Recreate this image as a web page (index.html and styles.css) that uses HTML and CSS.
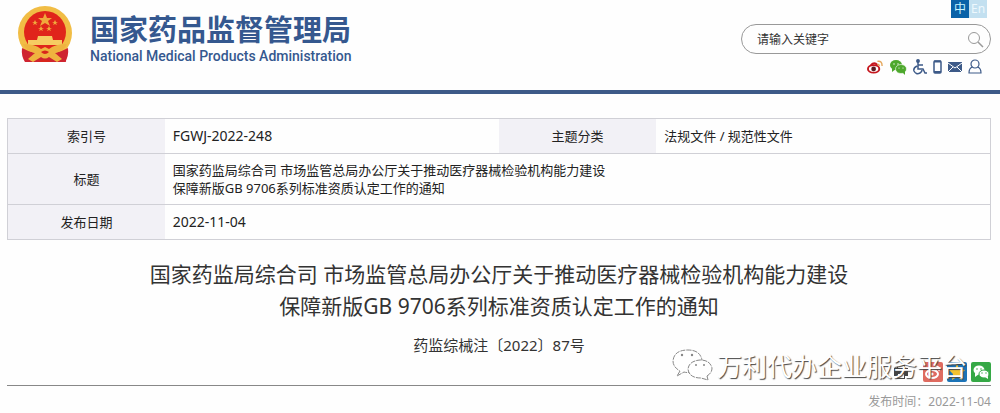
FILE: index.html
```html
<!DOCTYPE html>
<html lang="zh-CN">
<head>
<meta charset="utf-8">
<title>国家药品监督管理局</title>
<link rel="stylesheet" href="styles.css">
</head>
<body>
<header class="header">
  <a class="brand" href="#">
    <svg class="emblem" viewBox="0 0 54 58" aria-hidden="true">
      <path d="M5 36h44l-1 20q-11-4-21 0-10-4-20 0z" fill="#d0232a"/>
      <circle cx="27" cy="27" r="27" fill="#f1bd45"/>
      <circle cx="27" cy="26" r="21" fill="#e0241b"/>
      <path d="M4 42q-1 8 3 14h40q4-6 3-14-11 6-23 6T4 42z" fill="#cf2430"/>
      <path d="M27 7l2 5h5l-4 3 2 5-5-3-5 3 2-5-4-3h5zM17 14l1 2h2l-2 1 1 2-2-1-2 1 1-2-2-1h2zM37 14l1 2h2l-2 1 1 2-2-1-2 1 1-2-2-1h2zM23 20l1 2h2l-2 1 1 2-2-1-2 1 1-2-2-1h2zM31 20l1 2h2l-2 1 1 2-2-1-2 1 1-2-2-1h2z" fill="#f0a83c"/>
      <path d="M20 30h14l1 4h9v5H10v-5h9z" fill="#f6cc62"/>
      <path d="M5 38q12 0 18 5l4-2 4 2q6-5 18-5-3 7-12 9l7 6-5 3-8-5q-4 3-8 0l-8 5-5-3 7-6Q8 45 5 38z" fill="#efb33f"/>
      <path d="M23 46q4-3 8 0-4 4-8 0zM20 56q7-5 14 0z" fill="#d8261c"/>
    </svg>
    <span class="brand-text">
      <span class="brand-cn">国家药品监督管理局</span>
      <span class="brand-en">National Medical Products Administration</span>
    </span>
  </a>
  <div class="tools">
    <nav class="lang"><a class="lang-on" href="#">中</a><a href="#">En</a></nav>
    <form class="search">
      <input class="search-input" type="text" placeholder="请输入关键字" aria-label="请输入关键字">
      <button class="search-btn" type="button" aria-label="搜索">
        <svg viewBox="0 0 17 17"><circle cx="7" cy="7" r="5.500" fill="none" stroke="#999"/><path d="M11 11l5 5" stroke="#999" stroke-width="1.500"/></svg>
      </button>
    </form>
    <nav class="quick">
      <a href="#" aria-label="微博"><svg width="17" height="16" viewBox="0 0 18 16"><ellipse cx="7" cy="10" rx="7" ry="5" fill="#c5161d"/><ellipse cx="7" cy="10" rx="5" ry="3" fill="#fff"/><circle cx="7" cy="10" r="2.500" fill="#5b1b20"/><path d="M4 6q4-4 7 0" stroke="#c5161d" stroke-width="2" fill="none"/><path d="M11 2q5-1 5 5M11 5q2 0 2 2" stroke="#e5a75c" stroke-width="1.500" fill="none"/></svg></a>
      <a href="#" aria-label="微信"><svg width="17" height="16" viewBox="0 0 17 16"><ellipse cx="6" cy="6" rx="6" ry="5" fill="#4da82c"/><path d="M2 9v4l4-3z" fill="#4da82c"/><ellipse cx="11" cy="10" rx="5.500" ry="4.500" fill="#4da82c" stroke="#fff" stroke-width=".6"/><path d="M12 13l3 3v-4z" fill="#4da82c"/><g fill="#fff"><circle cx="4" cy="5" r=".7"/><circle cx="8" cy="5" r=".7"/><circle cx="9" cy="9" r=".6"/><circle cx="13" cy="9" r=".6"/></g></svg></a>
      <a href="#" aria-label="无障碍"><svg width="14" height="16" viewBox="0 0 14 16" fill="none" stroke="#3d5a88" stroke-width="1.500"><circle cx="5" cy="2" r="1.200" fill="#3d5a88"/><path d="M5 3v7h5l2 4h2M5 6h5M4 7q-4 2-3 5 2 4 6 2 2-1 2-3"/></svg></a>
      <a href="#" aria-label="手机"><svg width="9" height="14" viewBox="0 0 9 14"><rect x="1" y="1" width="7" height="12" rx="1" fill="#fff" stroke="#3d5a88" stroke-width="1.500"/><path d="M1 1.500h7M1 12h7" stroke="#3d5a88" stroke-width="2"/></svg></a>
      <a href="#" aria-label="邮箱"><svg width="14" height="12" viewBox="0 0 14 12"><path d="M0 1h14v10H0z" fill="#3d5a88"/><path d="M0 2l7 5 7-5M0 11l5-5M14 11L9 6" stroke="#fff" fill="none"/></svg></a>
      <a href="#" aria-label="用户"><svg width="14" height="16" viewBox="0 0 14 16" fill="none" stroke="#3d5a88" stroke-width="1.200"><circle cx="7" cy="5" r="4"/><path d="M4.500 8Q1 9 1 14h12q0-5-3.500-6"/></svg></a>
    </nav>
  </div>
</header>
<main class="main">
  <table class="info">
    <colgroup><col class="c1"><col class="c2"><col class="c3"><col class="c4"></colgroup>
    <tr><th scope="row">索引号</th><td class="code">FGWJ-2022-248</td><th scope="row">主题分类</th><td>法规文件 / 规范性文件</td></tr>
    <tr><th scope="row">标题</th><td colspan="3">国家药监局综合司 市场监管总局办公厅关于推动医疗器械检验机构能力建设<br>保障新版GB 9706系列标准资质认定工作的通知</td></tr>
    <tr><th scope="row">发布日期</th><td colspan="3" class="code">2022-11-04</td></tr>
  </table>
  <h1 class="title">国家药监局综合司 市场监管总局办公厅关于推动医疗器械检验机构能力建设<br>保障新版GB 9706系列标准资质认定工作的通知</h1>
  <p class="doc-no">药监综械注〔2022〕87号</p>
  <div class="share">
    <button class="print" type="button" aria-label="打印"><svg viewBox="0 0 16 16"><path d="M4 1h8v3h3v8h-3v3H4v-3H1V4h3z" fill="#444"/><path d="M5 2h6v2H5zM5 10h6v4H5z" fill="#fff"/></svg></button>
    <a class="share-btn weibo" href="#" aria-label="微博"><svg viewBox="0 0 20 20"><ellipse cx="9" cy="12" rx="6" ry="4" fill="none" stroke="#fff" stroke-width="2"/><circle cx="9" cy="12" r="1.500" fill="#fff"/><path d="M12 4q5 0 4 5" fill="none" stroke="#fff" stroke-width="1.500"/></svg></a>
    <a class="share-btn qzone" href="#" aria-label="QQ空间"><svg viewBox="0 0 20 20"><path d="M10 2l2 5 6 1-4 4 1 6-5-3-5 3 1-6-4-4 6-1z" fill="#f2c230"/></svg></a>
    <a class="share-btn wechat" href="#" aria-label="微信"><svg viewBox="0 0 20 20"><ellipse cx="8" cy="8" rx="5.500" ry="4.500" fill="#fff"/><path d="M4 11v4l4-3z" fill="#fff"/><ellipse cx="13" cy="12" rx="5" ry="4" fill="#fff" stroke="#35a845"/><path d="M14 15l3 2v-3z" fill="#fff"/><g fill="#35a845"><circle cx="6" cy="7" r=".8"/><circle cx="10" cy="7" r=".8"/><circle cx="11" cy="11" r=".7"/><circle cx="15" cy="11" r=".7"/></g></svg></a>
    <div class="watermark">
      <svg viewBox="0 0 42 32" fill="#fff" stroke="#888" stroke-dasharray="5 1"><path d="M9 22l-3 5 7-4q3 1 6 0 12-2 12-12Q29 1 17 1 3 1 2 12q0 6 7 10z"/><path d="M36 27q5-3 5-8-2-8-12-8-11 1-12 9 1 9 13 9l7 2z"/><g fill="#888" stroke="none"><circle cx="11" cy="6" r="1.200"/><circle cx="21" cy="6" r="1.200"/><circle cx="25" cy="16" r="1"/><circle cx="33" cy="16" r="1"/></g></svg>
      <span>万利代办企业服务平台</span>
    </div>
  </div>
  <p class="pub">发布时间：2022-11-04</p>
</main>
</body>
</html>
```
FILE: styles.css
```css
* { box-sizing: border-box; }
body {
  margin: 0;
  background: #fefefe;
  color: #222;
  font: 14px/18px "Noto Sans", "Noto Sans CJK SC", sans-serif;
}
a { color: inherit; text-decoration: none; }
svg { display: block; }
button { padding: 0; border: 0; background: none; }

.header {
  display: flex;
  justify-content: space-between;
  min-height: 94px;
  padding: 0 9px 0 18px;
  border-bottom: 4px solid #3d5a88;
}
.brand { display: flex; gap: 18px; padding-top: 6px; color: #35588f; }
.emblem { width: 54px; height: 58px; }
.brand-text { display: flex; flex-direction: column; padding-top: 4px; }
.brand-cn { font: 700 29px/36px "Noto Sans CJK SC", sans-serif; }
.brand-en { font: 500 14px/20px Roboto, sans-serif; }

.tools { display: flex; flex-direction: column; align-items: flex-end; width: 250px; }
.lang { display: flex; margin-right: 4px; }
.lang a {
  width: 18px;
  height: 18px;
  background: #c3e0f0;
  color: #eef8fd;
  font-size: 12px;
  text-align: center;
}
.lang .lang-on { background: #0a62a8; color: #c8f4ff; }
.search {
  display: flex;
  align-items: center;
  width: 100%;
  height: 30px;
  margin-top: 6px;
  padding: 0 6px 0 15px;
  border: 1px solid #999;
  border-radius: 15px;
}
.search-input {
  flex: 1;
  min-width: 0;
  padding: 0;
  border: 0;
  outline: 0;
  background: transparent;
  font: 12px/18px "Noto Sans CJK SC", sans-serif;
}
.search-input::placeholder { color: #333; opacity: 1; }
.search-btn svg { width: 17px; height: 17px; }
.quick { display: flex; align-items: center; gap: 6px; margin: 5px 9px 0 0; }

.main { padding: 24px 9px 0 7px; }
.info {
  width: 100%;
  border: 1px solid #d0d0d6;
  border-collapse: collapse;
  table-layout: fixed;
}
.info tr { height: 35px; }
.info tr:nth-child(2) { height: 51px; }
.info th, .info td {
  padding: 0 8px;
  border: solid #d0d0d6;
  border-width: 1px 0;
  font-size: 13px;
  font-weight: 400;
  text-align: left;
}
.info th { background: #f2f1f6; text-align: center; }
.info .code { font-size: 14px; }
.c1 { width: 16%; }
.c2 { width: 34%; }
.c3 { width: 16%; }
.c4 { width: 34%; }

.title {
  margin: 18px 0 0;
  color: #333;
  font-size: 21px;
  font-weight: 400;
  line-height: 32px;
  text-align: center;
}
.doc-no { margin: 14px 0 0; color: #333; font-size: 15px; text-align: center; }
.share {
  position: relative;
  display: flex;
  justify-content: flex-end;
  align-items: center;
  gap: 4px;
  margin-top: 8px;
  padding-bottom: 3px;
  border-bottom: 1px solid #888;
}
.print { width: 16px; height: 16px; margin-right: 10px; }
.share-btn { width: 20px; height: 20px; border-radius: 2px; }
.weibo { background: #df6b60; }
.qzone { background: #1c74b8; }
.wechat { background: #35a845; }
.watermark {
  position: absolute;
  right: 24px;
  bottom: 2px;
  display: flex;
  align-items: center;
  gap: 4px;
  color: #fff;
  font: 25px/36px "Noto Sans CJK SC", sans-serif;
  text-shadow: 1px 1px 1px #444;
  white-space: nowrap;
}
.watermark svg { width: 42px; height: 32px; }
.pub { margin: 7px 0 0; color: #999; font-size: 12px; text-align: right; }
```
